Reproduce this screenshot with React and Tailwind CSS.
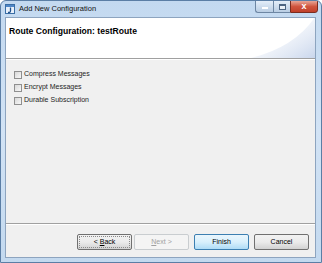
import React from 'react';

const Checkbox = ({ label }) => (
    <label className="flex items-center gap-[2px] h-[13px]">
        <span className="w-[8px] h-[8px] border border-[#8f8f8f] bg-gradient-to-br from-[#d8d8d8] to-[#f8f8f8] shrink-0" />
        <span>{label}</span>
    </label>
);

const WinButton = ({ children, variant, focused }) => {
    let cls = 'border-[#707070] bg-gradient-to-b from-[#f2f2f2] via-[#ebebeb] to-[#d2d2d2] text-[#000]';
    if (variant === 'default') cls = 'border-[#3c7fb1] bg-gradient-to-b from-[#eaf6fd] via-[#d9f0fc] to-[#afdcf6] text-[#000]';
    if (variant === 'disabled') cls = 'border-[#c9cdd0] bg-[#f4f4f4] text-[#a0a0a0]';
    return (
        <div className={`w-[55px] h-[16px] rounded-[2px] border flex p-[1px] ${cls}`}>
            <div className={`flex-1 flex items-center justify-center border ${focused ? 'border-dotted border-[#8a8a8a]' : 'border-transparent'}`}>
                {children}
            </div>
        </div>
    );
};

const AppIcon = () => (
    <svg width="10" height="10" viewBox="0 0 10 10">
        <rect x="0.5" y="0.5" width="9" height="9" fill="#e8f0fa" stroke="#3a6ea5" />
        <rect x="1" y="1" width="8" height="2" fill="#4f86c6" />
        <path d="M5.5 3.5 L5.5 7 Q5.5 8.5 4 8.5 L3 8.5" fill="none" stroke="#1d4f8c" strokeWidth="1.3" />
    </svg>
);

export default function App() {
    return (
        <div
            className="w-[322px] h-[263px] flex flex-col rounded-t-[6px] border border-[#5b7ea5] bg-gradient-to-b from-[#c3d9f0] via-[#d2e3f5] to-[#c3d9ef] overflow-hidden text-[7px] text-[#1e1e1e]"
            style={{ fontFamily: '"Liberation Sans", Arial, sans-serif' }}
        >
            {/* title bar */}
            <div className="h-[16px] flex items-start shrink-0">
                <div className="flex items-center h-[15px] pl-[4px] gap-[4px] pt-[1px]">
                    <AppIcon />
                    <span className="text-[#111] text-[7.5px]">Add New Configuration</span>
                </div>
                <div className="ml-auto mr-[3px] flex h-[13px] -mt-px">
                    <div className="w-[18px] h-full border border-[#6d86a3] border-r-0 rounded-bl-[3px] bg-gradient-to-b from-[#e4eef9] to-[#b9cde3] flex items-end justify-center pb-[3px]">
                        <span className="w-[6px] h-[2px] bg-[#4d6582] border border-white" />
                    </div>
                    <div className="w-[17px] h-full border border-[#6d86a3] border-r-0 bg-gradient-to-b from-[#e4eef9] to-[#b9cde3] flex items-center justify-center">
                        <span className="w-[7px] h-[6px] border border-[#4d6582] border-t-2 bg-white/60" />
                    </div>
                    <div className="w-[28px] h-full border border-[#7a2c1f] rounded-br-[3px] bg-gradient-to-b from-[#e6a597] via-[#d0553e] to-[#c0402a] flex items-center justify-center text-white text-[9px] font-bold leading-none">
                        x
                    </div>
                </div>
            </div>

            {/* body */}
            <div className="flex-1 flex flex-col ml-[4px] mr-[5px] mb-[4px] border border-[#8da4bf] bg-[#f0f0f0]">
                <div className="relative h-[41px] bg-white border-b border-[#a0a0a0] shrink-0 overflow-hidden">
                    <div className="pl-[3px] pt-[7px] font-bold text-[8.6px] text-[#000]">Route Configuration: testRoute</div>
                    <svg className="absolute right-0 bottom-0" width="64" height="41" viewBox="0 0 64 41">
                        <defs>
                            <linearGradient id="sw" x1="0" y1="0" x2="1" y2="1">
                                <stop offset="0%" stopColor="#ffffff" stopOpacity="0" />
                                <stop offset="100%" stopColor="#c9d6ec" stopOpacity="1" />
                            </linearGradient>
                        </defs>
                        <path d="M64 0 Q44 30 0 41 L64 41 Z" fill="url(#sw)" />
                    </svg>
                </div>
                <div className="h-px bg-white shrink-0" />

                <div className="flex-1 flex flex-col pl-[8px] pt-[8px]">
                    <Checkbox label="Compress Messages" />
                    <Checkbox label="Encrypt Messages" />
                    <Checkbox label="Durable Subscription" />
                </div>

                <div className="h-px bg-[#a0a0a0] shrink-0" />
                <div className="h-px bg-white shrink-0" />
                <div className="h-[32px] flex items-start pt-[9px] pr-[6px] justify-end shrink-0">
                    <div className="flex gap-[2px] mr-[5px]">
                        <WinButton focused>
                            <span>&lt; <u>B</u>ack</span>
                        </WinButton>
                        <WinButton variant="disabled">
                            <span><u>N</u>ext &gt;</span>
                        </WinButton>
                    </div>
                    <div className="flex gap-[5px]">
                        <WinButton variant="default">Finish</WinButton>
                        <WinButton>Cancel</WinButton>
                    </div>
                </div>
            </div>
        </div>
    );
}
